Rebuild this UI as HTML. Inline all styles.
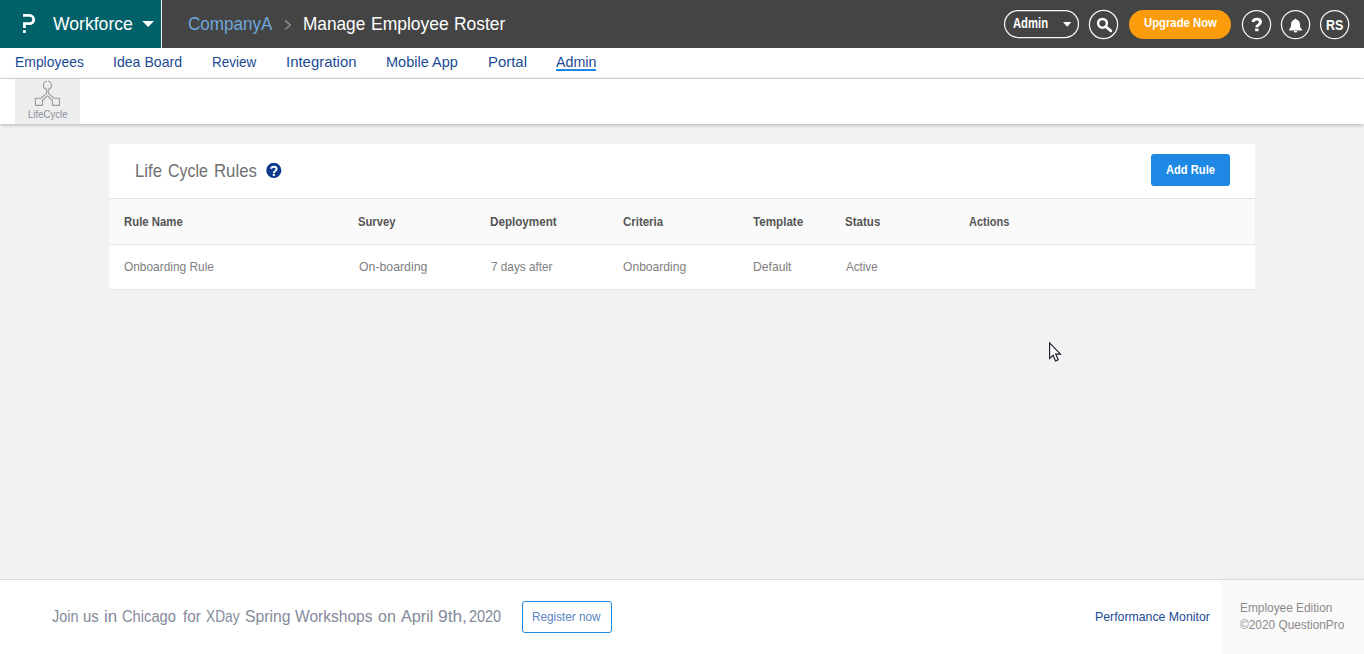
<!DOCTYPE html>
<html><head><meta charset="utf-8"><title>Manage Employee Roster</title>
<style>
html,body{margin:0;padding:0;}
body{width:1364px;height:654px;overflow:hidden;background:#f2f2f2;font-family:"Liberation Sans",sans-serif;position:relative;}
.t{position:absolute;white-space:pre;line-height:1;transform-origin:0 50%;display:block;}
.abs{position:absolute;box-sizing:border-box;}
#hdr{left:0;top:0;width:1364px;height:48px;background:#444444;}
#teal{left:0;top:0;width:161px;height:48px;background:#00616a;}
#tealline{left:161px;top:0;width:1px;height:48px;background:#f2f2f2;}
#nav{left:0;top:48px;width:1364px;height:31px;background:#ffffff;border-bottom:1px solid #dcdcdc;}
#sub{left:0;top:79px;width:1364px;height:45px;background:#ffffff;box-shadow:0 1px 4px rgba(0,0,0,0.27);}
#lcbox{left:15px;top:79px;width:65px;height:45px;background:#eeeeee;}
#adminul{left:556px;top:69px;width:40px;height:2px;background:#1e88e5;}
#card{left:109px;top:144px;width:1146px;height:146px;background:#ffffff;}
#thead{left:109px;top:199px;width:1146px;height:46px;background:#fafafa;border-bottom:1px solid #e6e6e6;}
#theadtop{left:109px;top:198.4px;width:1146px;height:1px;background:#e2e2e2;}
#cardbot{left:109px;top:289px;width:1146px;height:1px;background:#e6e6e6;}
#addbtn{left:1151px;top:154px;width:79px;height:32px;background:#1e88e5;border-radius:3px;}
#foot{left:0;top:579px;width:1364px;height:75px;background:#ffffff;border-top:1px solid #d9d9d9;}
#footr{left:1221px;top:580px;width:143px;height:74px;background:#fafafa;}
#regbtn{left:522px;top:601px;width:90px;height:32px;border:1px solid #1e88e5;border-radius:3px;background:#fff;}
.pill{border:1.25px solid #f4f4f4;border-radius:15px;}
#adminpill{left:1004px;top:10px;width:75px;height:28px;}
#c1{left:1088.8px;top:9.8px;width:29.4px;height:29.4px;}
#c2{left:1241.9px;top:9.9px;width:29.4px;height:29.4px;}
#c3{left:1280.8px;top:9.9px;width:29.4px;height:29.4px;}
#c4{left:1320px;top:9.9px;width:29.4px;height:29.4px;}
#upg{left:1129px;top:10px;width:102px;height:29px;border-radius:15px;background:#fc9c0a;}
svg{position:absolute;overflow:visible;}

</style></head>
<body>
<div id="hdr" class="abs"></div>
<div id="teal" class="abs"></div>
<div id="tealline" class="abs"></div>
<div id="nav" class="abs"></div>
<div id="sub" class="abs"></div>
<div id="lcbox" class="abs"></div>
<div id="adminul" class="abs"></div>
<div id="card" class="abs"></div>
<div id="thead" class="abs"></div>
<div id="theadtop" class="abs"></div>
<div id="cardbot" class="abs"></div>
<div id="addbtn" class="abs"></div>
<div id="foot" class="abs"></div>
<div id="footr" class="abs"></div>
<div id="regbtn" class="abs"></div>
<div id="upg" class="abs"></div>
<svg id="icons" width="1364" height="654" viewBox="0 0 1364 654" style="left:0;top:0;pointer-events:none">
  <!-- pills / circles -->
  <g fill="none" stroke="#f6f6f6" stroke-width="1.25">
    <rect x="1004.6" y="10.5" width="73.9" height="27" rx="13.5"/>
    <circle cx="1103.5" cy="24.5" r="14.1"/>
    <circle cx="1256.55" cy="24.6" r="14.1"/>
    <circle cx="1295.55" cy="24.6" r="14.1"/>
    <circle cx="1334.65" cy="24.6" r="14.1"/>
  </g>
  <!-- P logo -->
  <path d="M23,15.45 H29.55 A4.1,4.1 0 0 1 29.55,23.65 H24.42 V28" fill="none" stroke="#ffffff" stroke-width="2.8" stroke-linejoin="miter"/>
  <rect x="23" y="30.2" width="2.85" height="2.7" fill="#ffffff"/>
  <!-- workforce caret -->
  <path d="M142.3,21 H154 L148.15,27.1 Z" fill="#ffffff"/>
  <!-- chevron -->
  <path d="M285,20.4 L290.3,25 L285,29.5" fill="none" stroke="#8e8e8e" stroke-width="1.4"/>
  <!-- admin caret -->
  <path d="M1063,22 H1071.4 L1067.2,26.8 Z" fill="#ffffff"/>
  <!-- search -->
  <circle cx="1102.5" cy="23.3" r="4.4" fill="none" stroke="#ffffff" stroke-width="2.5"/>
  <path d="M1105.9,26.7 L1110.9,30.9" stroke="#ffffff" stroke-width="2.7" stroke-linecap="round"/>
  <!-- header ? -->
  <svg x="1251.4" y="17.7" width="10.6" height="13.5" viewBox="0.7 0 9.3 13" preserveAspectRatio="none">
    <path d="M2.0,4.2 C2.4,2.4 3.6,1.35 5.3,1.35 C7.3,1.35 8.65,2.4 8.65,4.1 C8.65,5.5 7.9,6.2 6.9,6.9 C5.9,7.6 5.45,8.0 5.45,9.3" fill="none" stroke="#ffffff" stroke-width="2.7"/>
    <rect x="3.95" y="10.3" width="3.0" height="2.7" rx="0.4" fill="#ffffff"/>
  </svg>
  <!-- bell -->
  <path d="M1295.5,18.7 c0.7,0 1.1,0.5 1.1,1.1 c2.1,0.5 3.3,2.2 3.3,4.4 c0,2.6 0.6,3.8 1.9,5 c0.5,0.5 0.2,1.3 -0.5,1.3 h-11.6 c-0.7,0 -1,-0.8 -0.5,-1.3 c1.3,-1.2 1.9,-2.4 1.9,-5 c0,-2.2 1.2,-3.9 3.3,-4.4 c0,-0.6 0.4,-1.1 1.1,-1.1 z M1293.7,30.9 h3.6 a1.8,1.6 0 0 1 -3.6,0 z" fill="#ffffff"/>
  <!-- lifecycle icon -->
  <path d="M46.85,81.3 A4.05,4.05 0 0 0 46.55,89.25 V93.2 L41,98.3 H35.4 V105.4 H42.5 V100.5 L47.45,95.6 L52.4,100.5 V105.4 H59.5 V98.3 H53.9 L48.35,93.2 V89.25 A4.05,4.05 0 0 0 48.05,81.3" fill="none" stroke="#989ba3" stroke-width="1.1" stroke-linejoin="round"/>
  <!-- help icon -->
  <circle cx="273.8" cy="170.45" r="7.6" fill="#0d3c8e"/>
  <svg x="270.1" y="165.8" width="7.4" height="10.1" viewBox="0.7 0 9.3 13" preserveAspectRatio="none">
    <path d="M1.9,3.9 C2.4,2.2 3.6,1.2 5.3,1.2 C7.3,1.2 8.8,2.3 8.8,4.1 C8.8,5.6 7.9,6.3 6.8,7 C5.8,7.7 5.4,8.1 5.4,9.2" fill="none" stroke="#ffffff" stroke-width="2.5"/>
    <rect x="4.05" y="10.3" width="2.7" height="2.7" rx="0.4" fill="#ffffff"/>
  </svg>
  <!-- cursor -->
  <path d="M1049.6,342.9 V358.4 L1053.1,355.2 L1055.6,360.9 L1058.2,359.8 L1055.7,354.2 L1060.4,354.2 Z" fill="#ffffff" stroke="#1c1f2a" stroke-width="1.2" stroke-linejoin="miter"/>
</svg>

<span class="t" style="left:53.14px;top:15.04px;font-size:18.5px;font-weight:400;color:#ffffff;transform:scaleX(0.9509);">Workforce</span>
<span class="t" style="left:187.64px;top:15.04px;font-size:18.5px;font-weight:400;color:#6fa8dc;transform:scaleX(0.9220);">CompanyA</span>
<span class="t" style="left:303.34px;top:15.04px;font-size:18.5px;font-weight:400;color:#ffffff;transform:scaleX(0.9304);">Manage</span>
<span class="t" style="left:370.79px;top:15.04px;font-size:18.5px;font-weight:400;color:#ffffff;transform:scaleX(0.9434);">Employee</span>
<span class="t" style="left:453.65px;top:15.04px;font-size:18.5px;font-weight:400;color:#ffffff;transform:scaleX(0.9397);">Roster</span>
<span class="t" style="left:1012.68px;top:15.30px;font-size:15px;font-weight:700;color:#ffffff;transform:scaleX(0.7500);">Admin</span>
<span class="t" style="left:1143.51px;top:15.57px;font-size:13.5px;font-weight:700;color:#ffffff;transform:scaleX(0.8373);">Upgrade Now</span>
<span class="t" style="left:1326.12px;top:17.30px;font-size:15px;font-weight:700;color:#ffffff;transform:scaleX(0.8304);">RS</span>
<span class="t" style="left:14.85px;top:53.50px;font-size:15px;font-weight:400;color:#1b4a94;transform:scaleX(0.9278);">Employees</span>
<span class="t" style="left:113.49px;top:53.50px;font-size:15px;font-weight:400;color:#1b4a94;transform:scaleX(0.9406);">Idea Board</span>
<span class="t" style="left:211.87px;top:53.50px;font-size:15px;font-weight:400;color:#1b4a94;transform:scaleX(0.8975);">Review</span>
<span class="t" style="left:286.48px;top:53.50px;font-size:15px;font-weight:400;color:#1b4a94;transform:scaleX(0.9943);">Integration</span>
<span class="t" style="left:386.43px;top:53.50px;font-size:15px;font-weight:400;color:#1b4a94;transform:scaleX(0.9669);">Mobile App</span>
<span class="t" style="left:487.63px;top:53.50px;font-size:15px;font-weight:400;color:#1b4a94;transform:scaleX(0.9942);">Portal</span>
<span class="t" style="left:555.54px;top:53.50px;font-size:15px;font-weight:400;color:#1b4a94;transform:scaleX(0.9507);">Admin</span>
<span class="t" style="left:27.54px;top:108.81px;font-size:10.5px;font-weight:400;color:#8b909c;transform:scaleX(0.9153);">LifeCycle</span>
<span class="t" style="left:134.63px;top:160.52px;font-size:19px;font-weight:400;color:#707070;transform:scaleX(0.8834);">Life</span>
<span class="t" style="left:167.92px;top:160.52px;font-size:19px;font-weight:400;color:#707070;transform:scaleX(0.8380);">Cycle</span>
<span class="t" style="left:213.52px;top:160.52px;font-size:19px;font-weight:400;color:#707070;transform:scaleX(0.8834);">Rules</span>
<span class="t" style="left:1165.50px;top:162.80px;font-size:13px;font-weight:700;color:#ffffff;transform:scaleX(0.8582);">Add Rule</span>
<span class="t" style="left:123.57px;top:214.80px;font-size:13px;font-weight:700;color:#555555;transform:scaleX(0.8741);">Rule Name</span>
<span class="t" style="left:358.32px;top:214.80px;font-size:13px;font-weight:700;color:#555555;transform:scaleX(0.8631);">Survey</span>
<span class="t" style="left:490.37px;top:214.80px;font-size:13px;font-weight:700;color:#555555;transform:scaleX(0.8955);">Deployment</span>
<span class="t" style="left:622.70px;top:214.80px;font-size:13px;font-weight:700;color:#555555;transform:scaleX(0.8803);">Criteria</span>
<span class="t" style="left:753.32px;top:214.80px;font-size:13px;font-weight:700;color:#555555;transform:scaleX(0.8950);">Template</span>
<span class="t" style="left:845.26px;top:214.80px;font-size:13px;font-weight:700;color:#555555;transform:scaleX(0.8907);">Status</span>
<span class="t" style="left:969.04px;top:214.80px;font-size:13px;font-weight:700;color:#555555;transform:scaleX(0.8441);">Actions</span>
<span class="t" style="left:123.51px;top:260.20px;font-size:13px;font-weight:400;color:#808080;transform:scaleX(0.9152);">Onboarding Rule</span>
<span class="t" style="left:359.04px;top:260.20px;font-size:13px;font-weight:400;color:#808080;transform:scaleX(0.9452);">On-boarding</span>
<span class="t" style="left:490.53px;top:260.20px;font-size:13px;font-weight:400;color:#808080;transform:scaleX(0.9047);">7 days after</span>
<span class="t" style="left:622.51px;top:260.20px;font-size:13px;font-weight:400;color:#808080;transform:scaleX(0.9300);">Onboarding</span>
<span class="t" style="left:752.70px;top:260.20px;font-size:13px;font-weight:400;color:#808080;transform:scaleX(0.9340);">Default</span>
<span class="t" style="left:846.00px;top:260.20px;font-size:13px;font-weight:400;color:#808080;transform:scaleX(0.8919);">Active</span>
<span class="t" style="left:51.82px;top:608.31px;font-size:17px;font-weight:400;color:#848a9a;transform:scaleX(0.8456);">Join</span>
<span class="t" style="left:83.14px;top:608.31px;font-size:17px;font-weight:400;color:#848a9a;transform:scaleX(0.8776);">us</span>
<span class="t" style="left:104.38px;top:608.31px;font-size:17px;font-weight:400;color:#848a9a;transform:scaleX(1.0017);">in</span>
<span class="t" style="left:122.24px;top:608.31px;font-size:17px;font-weight:400;color:#848a9a;transform:scaleX(0.8639);">Chicago</span>
<span class="t" style="left:182.68px;top:608.31px;font-size:17px;font-weight:400;color:#848a9a;transform:scaleX(0.9000);">for</span>
<span class="t" style="left:205.54px;top:608.31px;font-size:17px;font-weight:400;color:#848a9a;transform:scaleX(0.8067);">XDay</span>
<span class="t" style="left:244.87px;top:608.31px;font-size:17px;font-weight:400;color:#848a9a;transform:scaleX(0.9264);">Spring</span>
<span class="t" style="left:295.00px;top:608.31px;font-size:17px;font-weight:400;color:#848a9a;transform:scaleX(0.9152);">Workshops</span>
<span class="t" style="left:377.69px;top:608.31px;font-size:17px;font-weight:400;color:#848a9a;transform:scaleX(0.9403);">on</span>
<span class="t" style="left:400.82px;top:608.31px;font-size:17px;font-weight:400;color:#848a9a;transform:scaleX(0.9540);">April</span>
<span class="t" style="left:438.10px;top:608.31px;font-size:17px;font-weight:400;color:#848a9a;transform:scaleX(1.0195);">9th,</span>
<span class="t" style="left:468.54px;top:608.31px;font-size:17px;font-weight:400;color:#848a9a;transform:scaleX(0.8503);">2020</span>
<span class="t" style="left:532.30px;top:609.80px;font-size:13px;font-weight:400;color:#5a84c4;transform:scaleX(0.9044);">Register now</span>
<span class="t" style="left:1095.47px;top:610.00px;font-size:13px;font-weight:400;color:#1b4a94;transform:scaleX(0.9462);">Performance Monitor</span>
<span class="t" style="left:1240.27px;top:601.00px;font-size:13px;font-weight:400;color:#8a8a8a;transform:scaleX(0.9127);">Employee Edition</span>
<span class="t" style="left:1239.76px;top:618.00px;font-size:13px;font-weight:400;color:#8a8a8a;transform:scaleX(0.9121);">©2020 QuestionPro</span>
</body></html>
